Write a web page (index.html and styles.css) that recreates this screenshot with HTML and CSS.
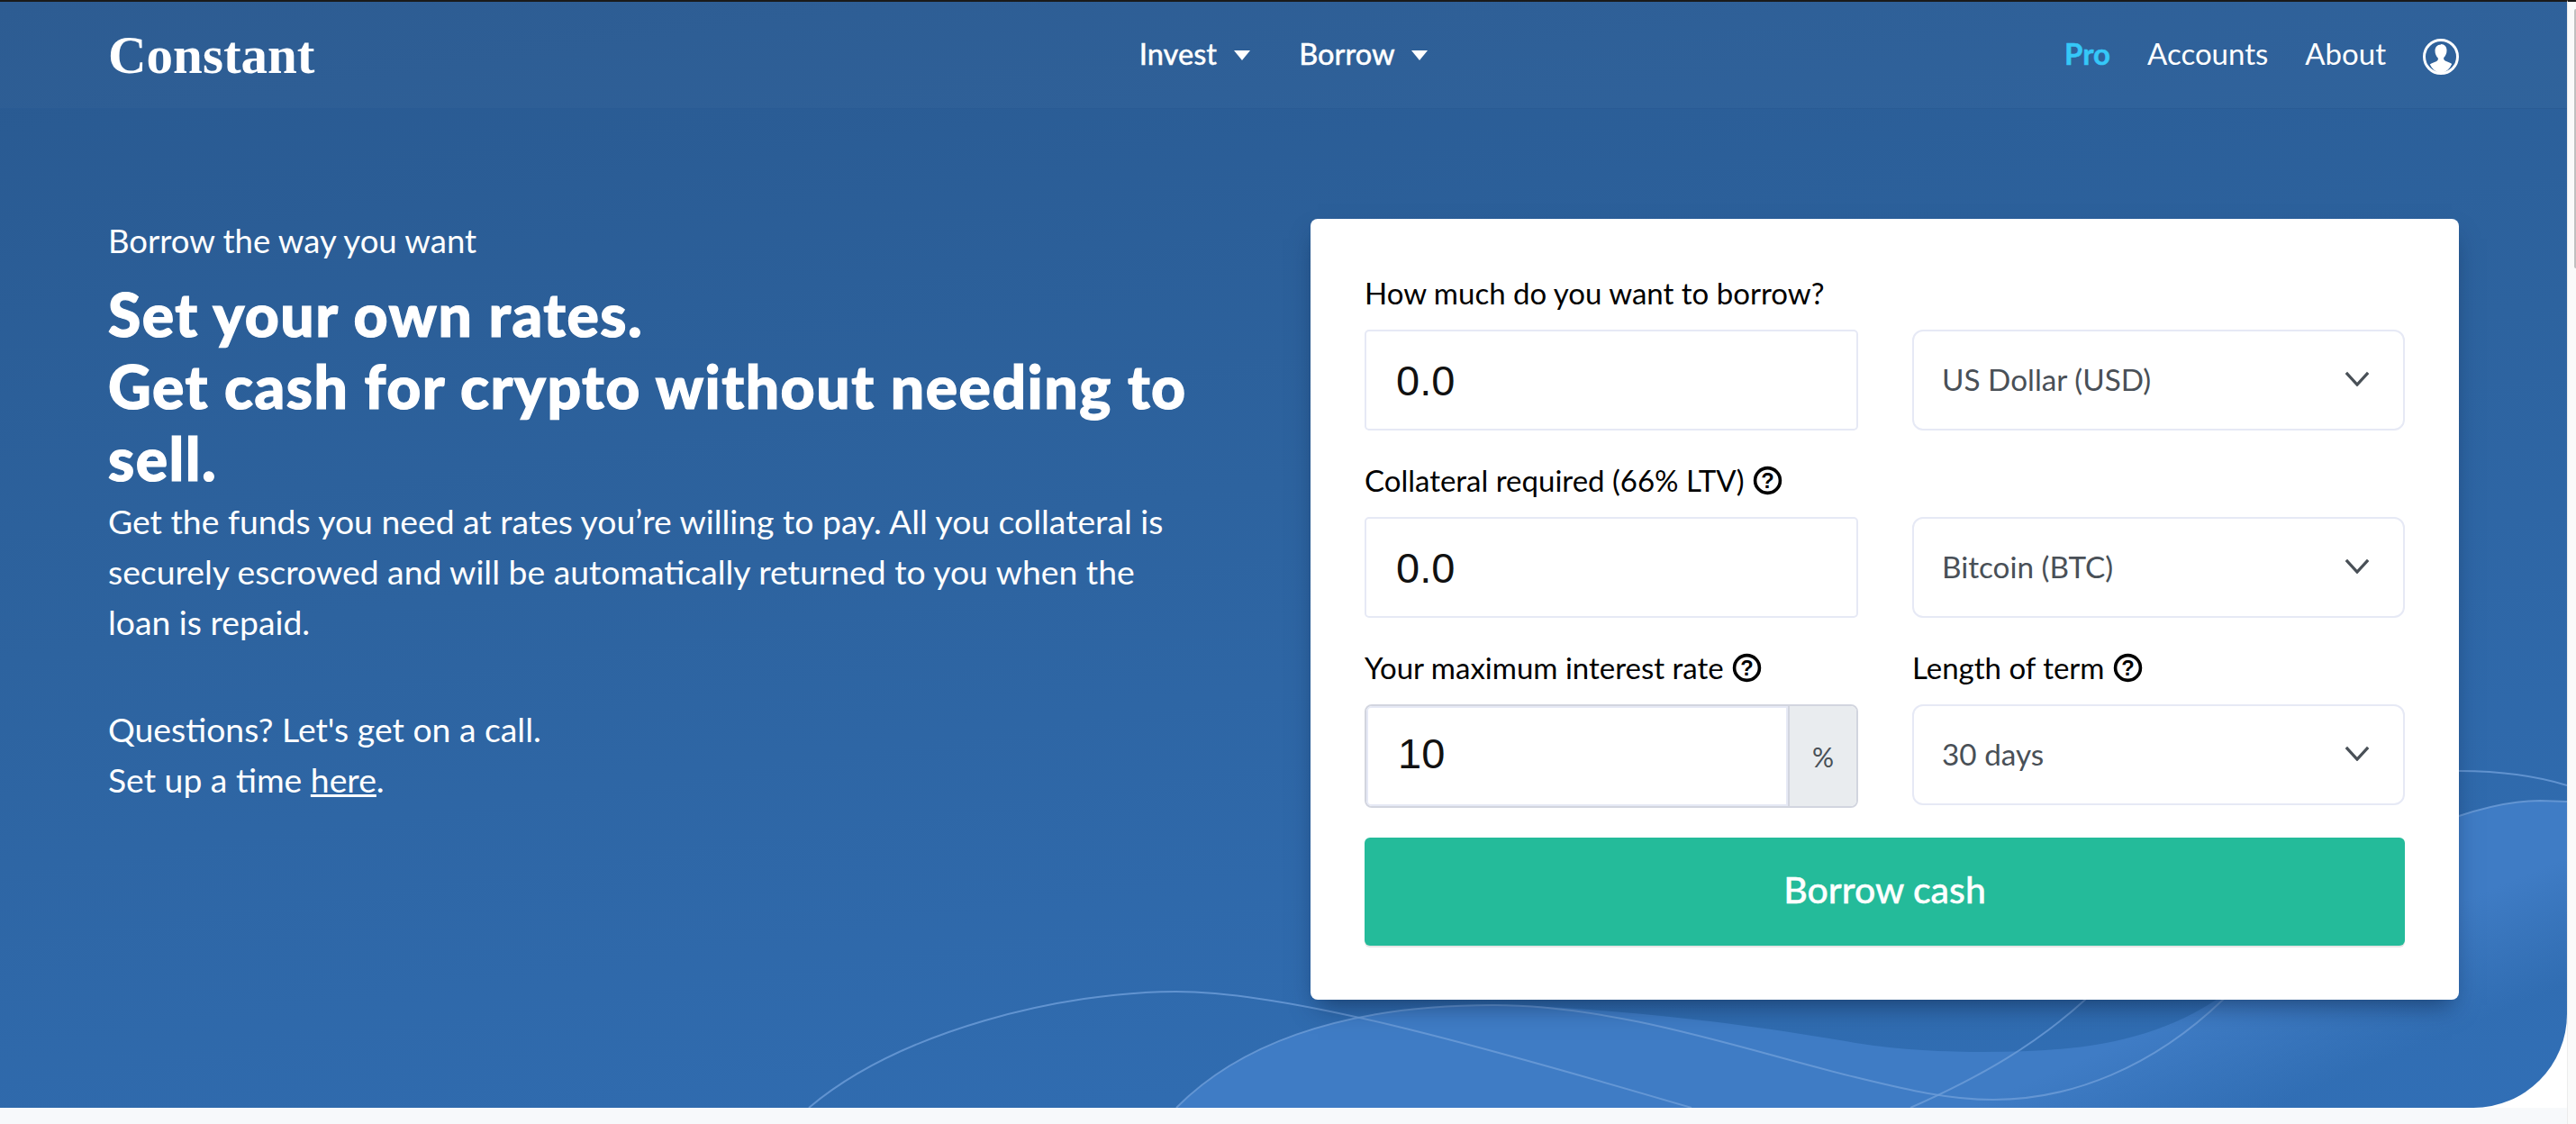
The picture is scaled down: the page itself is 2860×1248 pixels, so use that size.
FILE: index.html
```html
<!DOCTYPE html>
<html lang="en">
<head>
  <meta charset="UTF-8">
  <title>Constant</title>
  <link rel="stylesheet" href="styles.css">
</head>
<body>
  <div class="page">
    <div class="hero">
      <svg class="waves" width="2850" height="1230" viewBox="0 0 2850 1230" fill="none">
        <defs>
          <linearGradient id="waveFill" gradientUnits="userSpaceOnUse" x1="2590" y1="1060" x2="2640" y2="1180">
            <stop offset="0" stop-color="#3f7cc5"/>
            <stop offset="1" stop-color="#3f7cc5" stop-opacity="0"/>
          </linearGradient>
        </defs>
        <path fill="url(#waveFill)" d="M1306 1230C1370 1165 1480 1116 1658 1116C1760 1118 1900 1130 2060 1158C2110 1166 2160 1168 2203 1168C2300 1168 2390 1160 2468 1105C2560 1020 2640 935 2730 906C2760 896 2790 889 2820 889L2850 890V1230Z"/>
        <path class="wave-line" d="M898 1230C1000 1144 1180 1101 1306 1101C1430 1101 1640 1160 1878 1230"/>
        <path class="wave-line" d="M1306 1230C1370 1165 1480 1116 1658 1116C1800 1116 1950 1170 2060 1196C2110 1208 2160 1221 2213 1221C2300 1221 2390 1185 2468 1110C2560 1020 2640 935 2730 906C2760 896 2790 889 2820 889L2850 890"/>
        <path class="wave-line" d="M2121 1230C2200 1195 2260 1160 2315 1110C2450 990 2560 856 2730 856C2770 856 2810 860 2850 872"/>
      </svg>

      <header class="topbar">
        <div class="logo">Constant</div>
        <nav class="nav-center">
          <a class="nav-link">Invest <span class="caret"></span></a>
          <a class="nav-link">Borrow <span class="caret"></span></a>
        </nav>
        <nav class="nav-right">
          <a class="nav-pro">Pro</a>
          <a class="nav-plain">Accounts</a>
          <a class="nav-plain">About</a>
          <svg class="avatar" viewBox="0 0 40 40">
            <circle cx="20" cy="20" r="18.500" fill="none" stroke="#fff" stroke-width="3"/>
            <path fill="#fff" d="M20 6.500c-4.200 0-6.500 3-6.500 7 0 3.300 1.400 6.300 3.300 8 .3 2-.3 3-2 3.700-2.500 1-5 1.800-7 3.300A18 18 0 0 0 20 38.500a18 18 0 0 0 12.200-10.500c-2-1.500-4.500-2.300-7-3.300-1.700-.7-2.300-1.700-2-3.700 1.900-1.700 3.300-4.700 3.300-8 0-4-2.300-7-6.500-7z"/>
          </svg>
        </nav>
      </header>

      <main class="hero-main">
        <section class="intro">
          <p class="eyebrow">Borrow the way you want</p>
          <h1>Set your own rates.<br>Get cash for crypto without needing to sell.</h1>
          <p class="lead">Get the funds you need at rates you’re willing to pay. All you collateral is securely escrowed and will be automatically returned to you when the loan is repaid.</p>
          <p class="lead call">Questions? Let's get on a call.<br>Set up a time <a class="call-link">here</a>.</p>
        </section>

        <form class="card">
          <div class="field">
            <label>How much do you want to borrow?</label>
            <input class="text-input" type="text" value="0.0">
          </div>
          <div class="field">
            <label>&nbsp;</label>
            <div class="select"><span>US Dollar (USD)</span>
              <svg class="chevron" viewBox="0 0 30 18"><path d="M2 2l13 14L28 2"/></svg>
            </div>
          </div>

          <div class="field">
            <label>Collateral required (66% LTV)
              <svg class="help" viewBox="0 0 32 32"><circle cx="16" cy="16" r="13.500"/><text x="16" y="24" text-anchor="middle">?</text></svg>
            </label>
            <input class="text-input" type="text" value="0.0">
          </div>
          <div class="field">
            <label>&nbsp;</label>
            <div class="select"><span>Bitcoin (BTC)</span>
              <svg class="chevron" viewBox="0 0 30 18"><path d="M2 2l13 14L28 2"/></svg>
            </div>
          </div>

          <div class="field">
            <label>Your maximum interest rate
              <svg class="help" viewBox="0 0 32 32"><circle cx="16" cy="16" r="13.500"/><text x="16" y="24" text-anchor="middle">?</text></svg>
            </label>
            <div class="input-group">
              <input class="text-input" type="text" value="10">
              <span class="addon">%</span>
            </div>
          </div>
          <div class="field">
            <label>Length of term
              <svg class="help" viewBox="0 0 32 32"><circle cx="16" cy="16" r="13.500"/><text x="16" y="24" text-anchor="middle">?</text></svg>
            </label>
            <div class="select"><span>30 days</span>
              <svg class="chevron" viewBox="0 0 30 18"><path d="M2 2l13 14L28 2"/></svg>
            </div>
          </div>

          <button class="submit" type="button">Borrow cash</button>
        </form>
      </main>
    </div>
    <div class="band"></div>
  </div>
  <div class="scrollbar"><div class="thumb"></div></div>
</body>
</html>
```

FILE: styles.css
```css
html, body {
  margin: 0;
  height: 1248px;
  overflow: hidden;
}
body {
  display: flex;
  font-family: Lato, "Open Sans", sans-serif;
  color: #fff;
  background: #fff;
}
p, h1 {
  margin: 0;
}

.page {
  width: 2850px;
  display: flex;
  flex-direction: column;
}
.hero {
  position: relative;
  height: 1228px;
  border-top: 2px solid #1a1a1a;
  border-bottom-right-radius: 104px;
  overflow: hidden;
  background: linear-gradient(172deg, #295990 0%, #2d639f 45%, #316fb6 100%);
}
.band {
  flex: 1;
  background: #f7f9fb;
}
.scrollbar {
  width: 10px;
  background: #fafafa;
  border-top: 2px solid #1a1a1a;
  border-left: 1px solid #ececec;
  box-sizing: border-box;
}
.thumb {
  width: 2px;
  height: 288px;
  margin: 8px 0 0 7px;
  background: #c0c0c0;
  border-radius: 2px 0 0 2px;
}

.waves {
  position: absolute;
  left: 0;
  top: -2px;
}
.wave-line {
  stroke: #6e9dd8;
  stroke-width: 2;
  opacity: .8;
}

/* top bar */
.topbar {
  position: relative;
  height: 118px;
  padding: 0 120px;
  display: grid;
  grid-template-columns: 1fr auto 1fr;
  align-items: center;
  background: rgba(255, 255, 255, .02);
  border-bottom: 1px solid #2a5b94;
}
.logo {
  font-family: "Liberation Serif", serif;
  font-weight: bold;
  font-size: 59px;
}
.nav-center {
  display: flex;
  gap: 54px;
  margin-bottom: 4px;
}
.nav-link {
  font-size: 32.500px;
  font-weight: 500;
  -webkit-text-stroke: .3px #fff;
}
.caret {
  display: inline-block;
  margin-left: 11px;
  vertical-align: 5px;
  border-left: 9px solid transparent;
  border-right: 9px solid transparent;
  border-top: 11px solid #fff;
}
.nav-right {
  display: flex;
  justify-content: flex-end;
  align-items: center;
  font-size: 33px;
  gap: 41px;
}
.nav-right a {
  margin-bottom: 4px;
}
.nav-pro {
  color: #35c8f8;
  font-weight: bold;
  -webkit-text-stroke: .5px #35c8f8;
}
.avatar {
  width: 40px;
  height: 40px;
  margin-top: 3px;
}

/* hero content */
.hero-main {
  position: relative;
  display: flex;
  justify-content: space-between;
  padding: 122px 120px 0;
}
.intro {
  width: 1205px;
}
.eyebrow {
  font-size: 36.500px;
  line-height: 56px;
  margin-top: -4px;
}
h1 {
  font-size: 66px;
  font-weight: 900;
  line-height: 80px;
  letter-spacing: 1.500px;
  margin: 14px 0 2px;
  -webkit-text-stroke: 1.200px #fff;
}
.lead {
  font-size: 37.300px;
  line-height: 56px;
}
.call {
  margin-top: 63px;
}
.call-link {
  text-decoration: underline;
}

/* form card */
.card {
  width: 1275px;
  height: 867px;
  box-sizing: border-box;
  padding: 60px 60px 0;
  background: #fff;
  border-radius: 8px;
  box-shadow: 0 14px 26px -8px rgba(10, 30, 60, .55);
  display: grid;
  grid-template-columns: 548px 547px;
  column-gap: 60px;
  row-gap: 33px;
  align-content: start;
  color: #000;
}
label {
  display: flex;
  align-items: center;
  gap: 9px;
  font-size: 33px;
  line-height: 44px;
  margin-bottom: 19px;
}
.help {
  width: 33px;
  height: 33px;
}
.help circle {
  fill: none;
  stroke: #000;
  stroke-width: 3.500;
}
.help text {
  font-family: "Liberation Sans", sans-serif;
  font-weight: bold;
  font-size: 23px;
  fill: #000;
}
.text-input {
  display: block;
  width: 100%;
  height: 112px;
  box-sizing: border-box;
  padding: 0 0 0 33px;
  border: 2px solid #e6e9f5;
  border-radius: 5px;
  font-family: "Liberation Sans", sans-serif;
  font-size: 47px;
  color: #111;
  background: #fff;
  outline: none;
}
.input-group {
  display: flex;
  height: 115px;
  box-sizing: border-box;
  border: 2px solid #d2d5df;
  border-radius: 8px;
  overflow: hidden;
}
.input-group .text-input {
  flex: 1;
  min-width: 0;
  height: 100%;
  padding: 0 0 6px 33px;
  border-radius: 5px 0 0 5px;
}
.addon {
  width: 76px;
  display: flex;
  align-items: center;
  justify-content: center;
  background: #e9ecef;
  border-left: 2px solid #d2d5df;
  box-sizing: border-box;
  color: #495057;
  font-size: 30px;
}
.select {
  height: 112px;
  box-sizing: border-box;
  padding: 0 37px 3px 31px;
  display: flex;
  align-items: center;
  justify-content: space-between;
  border: 2px solid #e6e9f5;
  border-radius: 12px;
  font-size: 33.300px;
  color: #495057;
}
.chevron {
  width: 28px;
  height: 17px;
  fill: none;
  stroke: #495057;
  stroke-width: 3.500;
}
.submit {
  grid-column: 1 / 3;
  height: 120px;
  padding: 0 0 6px;
  border: 0;
  border-radius: 6px;
  background: #24bb9a;
  box-shadow: 0 2px 0 #e6e6e6;
  color: #fff;
  font-family: inherit;
  font-size: 41px;
  font-weight: 500;
  -webkit-text-stroke: .4px #fff;
}
```
